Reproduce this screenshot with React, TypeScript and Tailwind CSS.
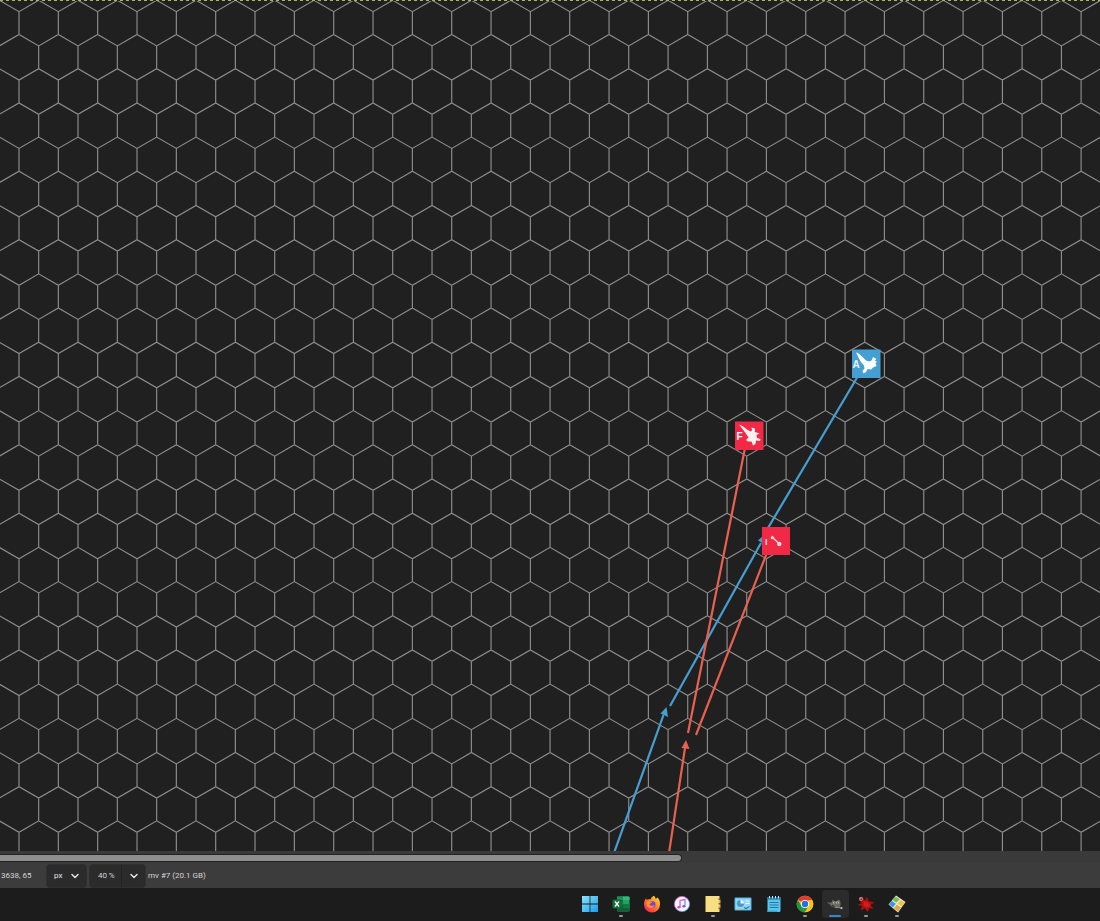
import React from 'react';
import { ChevronDown } from 'lucide-react';

const HEX_W = 39.337;
const ROW_H = 34.19;
const SIDE = 22.8;
const ORIGIN_X = 19;
const ORIGIN_Y = 11.7;

// One zigzag per row plus the vertical sides hanging under it
const buildHexPath = (cols: number, rows: number) => {
	const half = HEX_W / 2;
	const parts: string[] = [];
	for (let row = -1; row < rows; row++) {
		const y = ORIGIN_Y + row * ROW_H;
		const startX = ORIGIN_X - 2 * HEX_W + (row % 2 === 0 ? 0 : half);
		const peakY = y - (ROW_H - SIDE);
		let line = `M${startX} ${y}`;
		for (let col = 0; col < cols; col++) {
			const x = startX + col * HEX_W;
			line += `L${x + half} ${peakY}L${x + HEX_W} ${y}`;
			parts.push(`M${x} ${y}V${y + SIDE}`);
		}
		parts.push(line);
	}
	return parts.join('');
};

const hexPath = buildHexPath(70, 50);

const HexMap: React.FC = () => (
	<svg className="block w-full flex-1 min-h-0 bg-[#202020]" role="img" aria-label="Hex map">
		<path d={hexPath} fill="none" stroke="#8e8e8e" strokeWidth="1.15" />

		{/* Canvas boundary */}
		<path d="M0 0.5H4000" stroke="#20240c" />
		<path d="M0 0.5H4000" stroke="#a9b36a" strokeDasharray="3 3" />

		{/* Blue track */}
		<g stroke="#469fd3" strokeWidth="2.2" fill="none">
			<path d="M614 853L663.5 715" />
			<path d="M670 706L761 543" />
			<path d="M768 528L858 376" />
		</g>
		<path d="M666.5 707L660.5 713.5L668 717Z" fill="#469fd3" />
		<path d="M764.5 534.5L758 540.5L765.5 545Z" fill="#469fd3" />

		{/* Red tracks */}
		<g stroke="#e8604f" strokeWidth="2.2" fill="none">
			<path d="M669 853L685 748" />
			<path d="M688 733L745 448" />
			<path d="M696 735L768 550" />
		</g>
		<path d="M686 740L681.5 748L689.5 749Z" fill="#e8604f" />

		{/* Counters */}
		<g fontFamily="Liberation Sans, Arial, sans-serif" fontWeight="700" fontSize="10">
			<rect x="852" y="349.5" width="28.5" height="28.5" fill="#469fd3" />
			<text x="852.5" y="368" fill="#e8f3fa">A</text>
			<path
				d="M856 352.5L858 353L862 356.5L866 360.5L869 361.5L871.5 360.5L873 357L876.5 359L874.5 360.500L877 361.500L875.500 363L876.500 366L873 367.500L871 369.500L867.500 369L866 372L863.500 373.500L862.500 371L864.500 368.500L864 365.500L860.500 361.500L858 356.500Z"
				fill="#fff"
			/>

			<rect x="735" y="421.5" width="28.5" height="28.5" fill="#f12846" />
			<path
				d="M739 424.500L742.500 426L747 429.500L750.500 431.500L752 430.500L751.500 427.500L755 428.500L755 432L759.500 433.500L756.500 435L757 438L760.500 439L760 441L756 440.500L755.500 444L753 445.500L751.500 441.500L748 441.500L746 440L748.500 437.500L745.500 433L742.500 429Z"
				fill="#fbeff0"
			/>
			<text x="736.5" y="440" fill="#fff">F</text>

			<rect x="762" y="527" width="28" height="28" fill="#f12846" />
			<path d="M772 537L779 543.5" stroke="#f9d9dd" strokeWidth="1.4" />
			<path d="M770.5 538L772 535.5L774.5 537.5L772 539.5Z" fill="#f9d9dd" />
			<circle cx="779.3" cy="544" r="2.2" fill="#f9d9dd" />
			<text x="765" y="545" fontSize="9" fill="#f9d9dd">I</text>
		</g>
	</svg>
);

const ScrollBar: React.FC = () => (
	<div className="h-3 bg-[#3a3a3a] pt-[3px]">
		<div className="h-2 w-[62%] rounded-r-full border border-l-0 border-[#222222] bg-[#8e8e8e]" />
	</div>
);

const StatusBar: React.FC = () => (
	<div className="flex h-[25px] items-end bg-[#3c3c3c] text-[8px] text-[#d4d4d4]">
		<span className="w-[46px] pl-[1px] leading-6">3638, 65</span>
		<div className="relative h-6 w-[41px] rounded-sm border border-[#303030] bg-[#2b2b2b]">
			<select aria-label="Unit" className="h-full w-full appearance-none bg-transparent pl-[7px] text-[#e4e4e4] outline-none">
				<option>px</option>
				<option>in</option>
				<option>mm</option>
			</select>
			<ChevronDown className="pointer-events-none absolute top-[5px] right-[5px] size-3 text-[#e4e4e4]" strokeWidth={3} />
		</div>
		<div className="ml-[2px] flex h-6 w-[57px] rounded-sm border border-[#303030] bg-[#2b2b2b]">
			<input
				aria-label="Zoom"
				defaultValue={'40\u2009%'}
				className="w-8 border-r border-[#222222] bg-transparent pl-2 outline-none"
			/>
			<button type="button" aria-label="Zoom presets" className="flex flex-1 items-center justify-center">
				<ChevronDown className="size-3 text-[#e4e4e4]" strokeWidth={3} />
			</button>
		</div>
		<span className="ml-[2px] leading-6">mv #7 (20.1 GB)</span>
	</div>
);

const WindowsIcon = () => (
	<>
		<defs>
			<linearGradient id="win" x1="0" y1="0" x2="1" y2="1">
				<stop offset="0" stopColor="#8be4ff" />
				<stop offset="1" stopColor="#1c9cea" />
			</linearGradient>
		</defs>
		<path d="M1 1h7.6v7.6H1zM9.4 1H17v7.6H9.4zM1 9.4h7.6V17H1zM9.4 9.4H17V17H9.4z" fill="url(#win)" />
	</>
);

const ExcelIcon = () => (
	<>
		<rect x="5" y="1.5" width="12.5" height="15" rx="1" fill="#21a366" />
		<path d="M5 1.5h6V5H5z" fill="#1d8f58" />
		<path d="M11 1.5h5.5a1 1 0 0 1 1 1V5H11z" fill="#33b777" />
		<path d="M5 5h6v5H5z" fill="#107c41" />
		<path d="M11 9h6.5v4H11z" fill="#107c41" />
		<path d="M5 10h6v6.5H6a1 1 0 0 1-1-1zM11 13h6.5v2.5a1 1 0 0 1-1 1H11z" fill="#185c37" />
		<rect x="0.5" y="4.5" width="9" height="9" rx="1" fill="#0e6e3a" />
		<path d="M3 6.5l4 5M7 6.5l-4 5" stroke="#fff" strokeWidth="1.4" />
	</>
);

const FirefoxIcon = () => (
	<>
		<defs>
			<linearGradient id="fox" x1="1" y1="0" x2="0.2" y2="1">
				<stop offset="0" stopColor="#ffe548" />
				<stop offset="0.4" stopColor="#ff9b21" />
				<stop offset="0.75" stopColor="#ff4f3c" />
				<stop offset="1" stopColor="#e4246e" />
			</linearGradient>
		</defs>
		<path
			d="M11 0.8c1 1.2 1.4 2 1.6 3 .9-.2 1.5-.6 2-1.2C16.4 4.5 17.2 7 17 9.6A8 8 0 0 1 1 9.5C.9 7 1.7 4.8 3.2 3.2l.5 1.7C5 4 6.5 4 7.5 4.6 8 3 9.2 1.5 11 .8z"
			fill="url(#fox)"
		/>
		<circle cx="9.2" cy="9.6" r="3.3" fill="#7542e5" />
		<path d="M3.5 7c2-1.5 4-.8 5.6.3-.5 1-2 1-2.6 1.9 1 2.3 3.5 1.8 5 .8-.2 3-5.6 4.5-8 .5z" fill="#ff9328" />
	</>
);

const MusicIcon = () => (
	<>
		<defs>
			<linearGradient id="music" x1="0" y1="0" x2="1" y2="1">
				<stop offset="0" stopColor="#ff5ca8" />
				<stop offset="0.5" stopColor="#a667f0" />
				<stop offset="1" stopColor="#3cbcf5" />
			</linearGradient>
		</defs>
		<circle cx="9" cy="9" r="7.6" fill="#f8f5fb" stroke="url(#music)" strokeWidth="0.8" />
		<path d="M7 12V5.5l5-1.2v6.5" fill="none" stroke="url(#music)" strokeWidth="1.3" />
		<ellipse cx="5.9" cy="12.2" rx="1.6" ry="1.3" fill="#e34fae" />
		<ellipse cx="10.9" cy="11.2" rx="1.6" ry="1.3" fill="#7c5be8" />
	</>
);

const NotesIcon = () => (
	<>
		<path d="M1.5 1h14v16h-14z" fill="#f5df82" />
		<path d="M14.5 3.5h2V5h-2zM14.5 8h2v1.5h-2zM14.5 12.5h2V14h-2z" fill="#6d6136" />
		<path d="M15 5h1.5v3H15zM15 9.5h1.5v3H15z" fill="#dcb957" />
	</>
);

const ControlPanelIcon = () => (
	<>
		<rect x="0.5" y="2.5" width="17" height="13" rx="1" fill="#4fb4e4" />
		<rect x="1.5" y="3.5" width="15" height="11" fill="#93d7f5" />
		<circle cx="6.5" cy="8.5" r="3.6" fill="#3f9bd6" />
		<path d="M6.5 8.5V4.9a3.6 3.6 0 0 1 3.6 3.6z" fill="#f4f8fa" />
		<path d="M11.5 6h4M11.5 8.5h4" stroke="#e9f7fd" />
		<path d="M3 13.3h5" stroke="#e0c467" strokeWidth="1.3" />
		<path d="M10 12.5l2 1 3.5-2" stroke="#2077b3" strokeWidth="1.2" fill="none" />
	</>
);

const NotepadIcon = () => (
	<>
		<path d="M2.5 2h13v13.5a1.5 1.5 0 0 1-1.5 1.5H2.5z" fill="#5cc6ea" />
		<path d="M2.5 2h13v2.5h-13z" fill="#176f9b" />
		<path d="M4.5 1v2.5M7.5 1v2.5M10.5 1v2.5M13.5 1v2.5" stroke="#c8e7f3" />
		<path d="M4.5 7.5h9M4.5 10h9M4.5 12.5h9" stroke="#1f7ba8" />
		<path d="M2.5 15.5h10V17h-10z" fill="#3ba4d0" />
	</>
);

const ChromeIcon = () => (
	<>
		<circle cx="9" cy="9" r="8.3" fill="#fbc116" />
		<path d="M9 9L1.8 4.85A8.3 8.3 0 0 1 16.2 4.85z" fill="#e33b2e" />
		<path d="M1.8 4.85L5.5 11 9 17.3A8.3 8.3 0 0 1 1.8 4.85z" fill="#229342" />
		<path d="M5.5 11L9 9l3.5 2L9 17.3z" fill="#229342" />
		<path d="M9 17.3L12.5 11 12.3 4.9h3.9A8.3 8.3 0 0 1 9 17.3z" fill="#fbc116" />
		<circle cx="9" cy="9" r="4.1" fill="#fff" />
		<circle cx="9" cy="9" r="3.2" fill="#1a73e8" />
	</>
);

const GimpIcon = () => (
	<>
		<path
			d="M1.5 7c1.5 1.3 3 .8 4.5 0l.5-2.5 2 1.7 2.5-.2 2-1.5 1.500 2.500v3l-1 2.500-2.500 1L8 12.500l-3-1.500-1.500-2L1.500 8z"
			fill="#6d6a65"
		/>
		<circle cx="8.2" cy="7.8" r="1.1" fill="#dedede" />
		<circle cx="11.5" cy="7.8" r="1.2" fill="#dedede" />
		<circle cx="8.3" cy="7.9" r="0.6" fill="#111" />
		<circle cx="11.4" cy="7.9" r="0.6" fill="#111" />
		<path d="M9 12l6 1" stroke="#8f8a82" />
		<circle cx="15.5" cy="13" r="1" fill="#ddd6c9" />
		<path d="M6 10.5l2.5 1" stroke="#222" />
	</>
);

const SplatIcon = () => (
	<>
		<path
			d="M2 3.500l3-2 3 4L10 1.500l1.500 4.500 6 1.500-4 2.500 3 4-4-1-2 4-2.500-3.500-4.500 2 1.500-4.500L.5 10l4-2z"
			fill="#ad0f0f"
		/>
		<path d="M6.5 6l4.5 1 2.5 4-4 1.5-3-2z" fill="#d01d18" />
		<circle cx="4" cy="4" r="1.9" fill="#d58f8c" />
		<circle cx="4.2" cy="4.2" r="0.8" fill="#551111" />
	</>
);

const TilesIcon = () => (
	<>
		<path d="M8 .5l9.5 6.5L10 17.5.5 9.5z" fill="#e9eef0" />
		<path d="M7.5 1.5L12 4.3 8.3 7.8 4.3 5z" fill="#7fbb4f" />
		<path d="M12.9 4.9L17 7.6l-3.5 4-4.2-3.2z" fill="#f0c53c" />
		<path d="M3.7 5.8L7.9 8.8 5 12.5 1 9.4z" fill="#3d97d9" />
		<path d="M8.8 9.4l4.2 3-3 4.1-4.2-3.2z" fill="#e9a53f" />
	</>
);

interface TaskItem {
	name: string;
	icon: React.ReactNode;
	running?: boolean;
	active?: boolean;
}

const tasks: TaskItem[] = [
	{ name: 'Start', icon: <WindowsIcon /> },
	{ name: 'Excel', icon: <ExcelIcon />, running: true },
	{ name: 'Firefox', icon: <FirefoxIcon /> },
	{ name: 'Music', icon: <MusicIcon /> },
	{ name: 'Notes', icon: <NotesIcon />, running: true },
	{ name: 'Control Panel', icon: <ControlPanelIcon /> },
	{ name: 'Notepad', icon: <NotepadIcon /> },
	{ name: 'Chrome', icon: <ChromeIcon />, running: true },
	{ name: 'GIMP', icon: <GimpIcon />, active: true },
	{ name: 'Splat', icon: <SplatIcon />, running: true },
	{ name: 'Tiles', icon: <TilesIcon />, running: true },
];

const TaskBar: React.FC = () => (
	<nav aria-label="Taskbar" className="flex h-[33px] justify-end bg-[#1c1c1c] pr-[188px]">
		<div className="grid w-[337px] grid-cols-11">
			{tasks.map((task) => (
				<button
					key={task.name}
					type="button"
					aria-label={task.name}
					className={`mx-[2px] mt-[2px] flex h-7 flex-col items-center rounded-sm pt-[5px] ${
						task.active ? 'bg-[#2b2b2b]' : ''
					}`}
				>
					<svg viewBox="0 0 18 18" className="size-[18px] shrink-0">
						{task.icon}
					</svg>
					{task.running && <span className="mt-[2px] h-[2px] w-1 rounded-full bg-[#9a9a9a]" />}
					{task.active && <span className="mt-[2px] h-[2px] w-3 rounded-full bg-[#3a86cc]" />}
				</button>
			))}
		</div>
	</nav>
);

const App: React.FC = () => {
	return (
		<div className="flex h-screen flex-col bg-[#202020] font-[Roboto,sans-serif]">
			<HexMap />
			<ScrollBar />
			<StatusBar />
			<TaskBar />
		</div>
	);
};

export default App;
